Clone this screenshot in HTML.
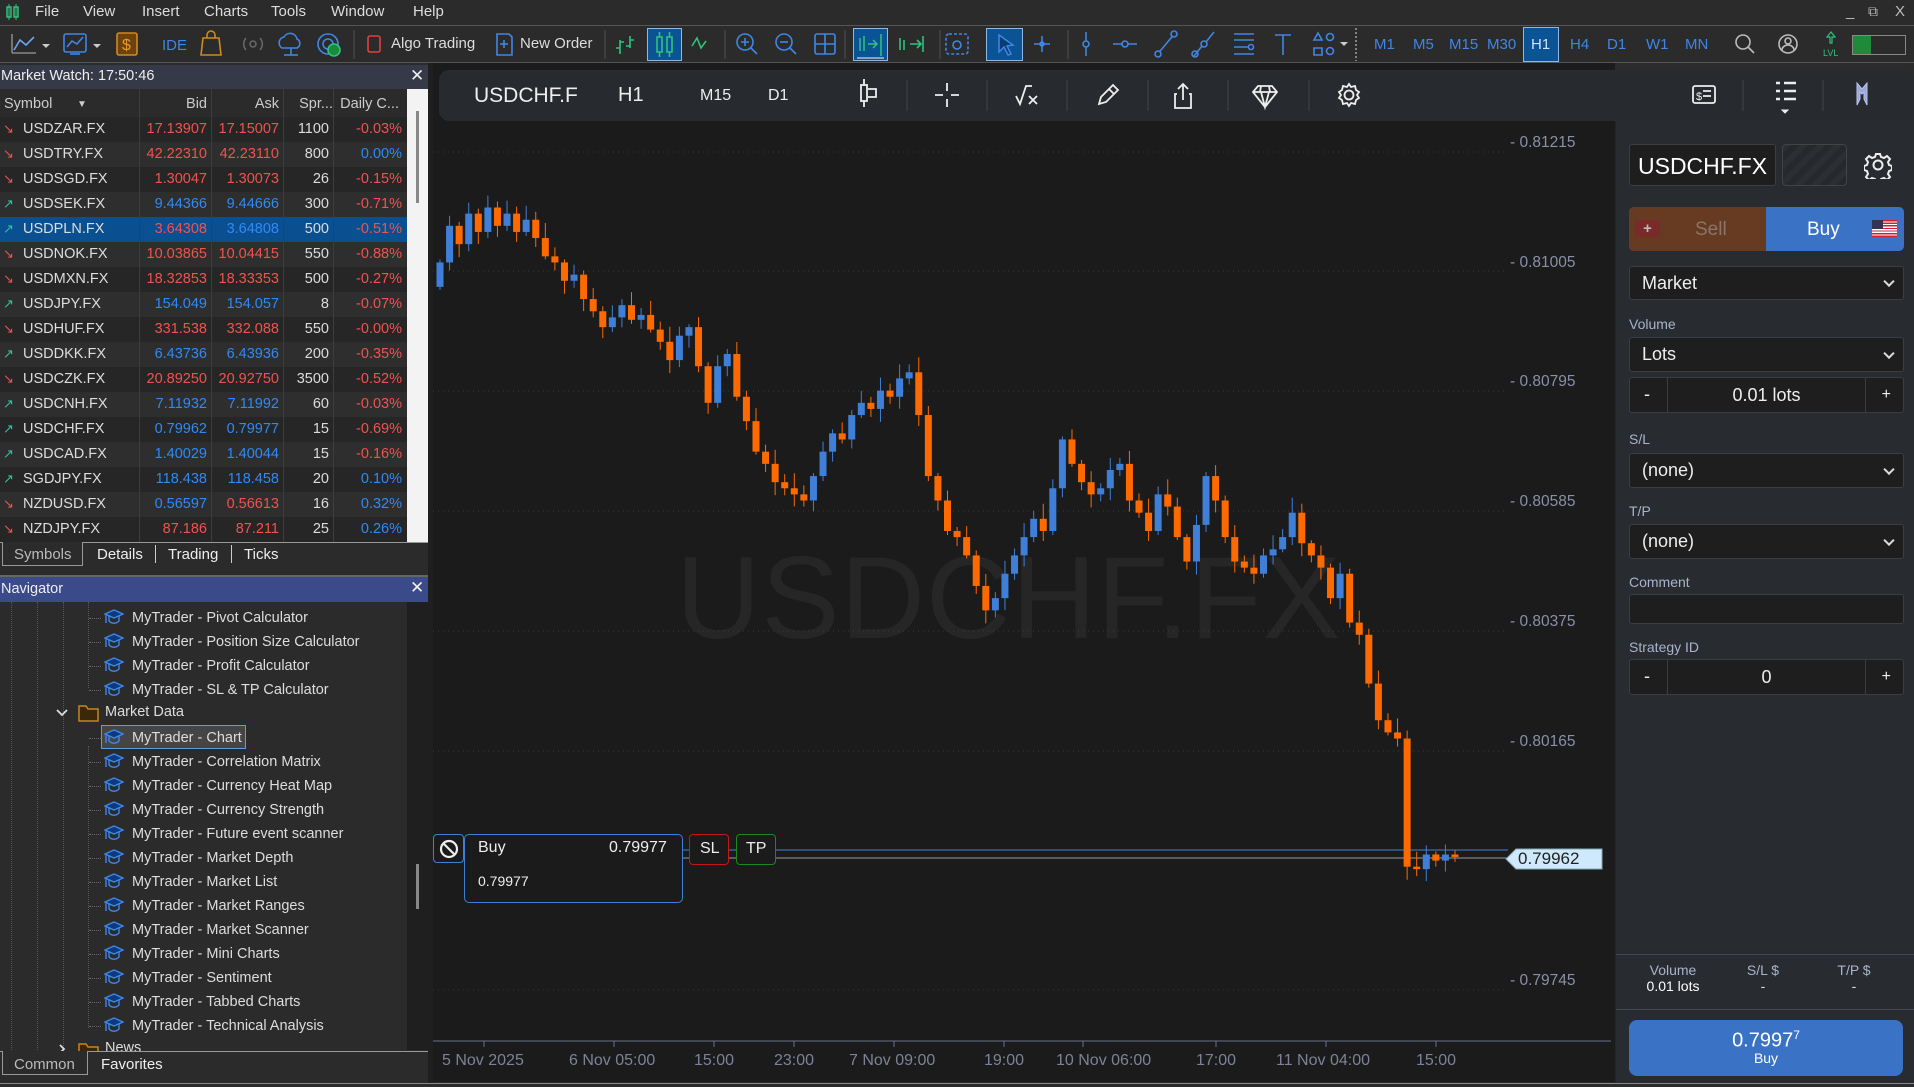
<!DOCTYPE html>
<html><head><meta charset="utf-8"><style>
*{box-sizing:border-box;margin:0;padding:0}
body{width:1914px;height:1087px;background:#2b2b2b;font-family:"Liberation Sans",sans-serif;color:#ddd;position:relative;overflow:hidden;font-size:14px}
.a{position:absolute}
.menu span{position:absolute;top:3px;font-size:15px;color:#ddd}
.tf{position:absolute;top:36px;font-size:15px;color:#3f86e6}
.hl{position:absolute;background:#0a5394;border:1px solid #8fb8e6}
.row{position:absolute;left:0;width:407px;height:25px;font-size:14.5px}
.row span{position:absolute;top:4px}
.c1{left:23px;color:#ddd}.c2{right:200px}.c3{right:128px}.c4{right:78px;color:#ddd}.c5{right:5px}
.r{color:#f0534f}.b{color:#2f8af5}
.arr{left:3px;font-size:13px;top:4px}
.nav{position:absolute;font-size:14.5px;color:#ddd;left:132px}
.ic{position:absolute;left:104px;width:20px;height:16px}
.lbl{position:absolute;left:1629px;font-size:14px;color:#a8b4cc}
.inp{position:absolute;left:1629px;width:275px;background:#1e1e1e;border:1px solid #3a3d42;border-radius:3px;color:#eee;font-size:18px}
.chev{position:absolute;right:10px;top:50%;width:8px;height:8px;border-right:2px solid #ddd;border-bottom:2px solid #ddd;transform:translateY(-70%) rotate(45deg)}
.pl{position:absolute;left:1510px;font-size:15.5px;color:#8a90a8}
.tl{position:absolute;top:1052px;font-size:16px;color:#7d8298}
</style></head><body>
<!-- menu -->
<div class="menu a" style="left:0;top:0;width:1914px;height:25px;background:#2b2b2b">
<svg class="a" style="left:6px;top:4px" width="14" height="16"><rect x="1" y="3" width="4" height="10" fill="none" stroke="#2ec27e" stroke-width="1.5"/><rect x="8" y="3" width="4" height="10" fill="none" stroke="#2ec27e" stroke-width="1.5"/><line x1="3" y1="0" x2="3" y2="16" stroke="#2ec27e"/><line x1="10" y1="0" x2="10" y2="16" stroke="#2ec27e"/></svg>
<span style="left:35px">File</span><span style="left:83px">View</span><span style="left:142px">Insert</span><span style="left:204px">Charts</span><span style="left:271px">Tools</span><span style="left:331px">Window</span><span style="left:413px">Help</span>
<span style="left:1846px;color:#bbb">_</span><span style="left:1868px;color:#bbb;font-size:14px">⧉</span><span style="left:1895px;color:#bbb">X</span>
</div>
<div class="a" style="left:0;top:25px;width:1914px;height:1px;background:#555"></div>
<!-- toolbar -->
<div class="a" style="left:0;top:26px;width:1914px;height:37px;background:#2b2b2b;border-bottom:1px solid #555"></div>
<svg class="a" style="left:0;top:26px" width="1914" height="37" fill="none" stroke-width="1.6">
<polyline points="14,24 20,14 26,19 34,11" stroke="#6ea3f0"/><line x1="12" y1="8" x2="12" y2="27" stroke="#888"/><line x1="12" y1="27" x2="36" y2="27" stroke="#888"/>
<path d="M42 18l4 4 4-4z" fill="#ccc" stroke="none"/>
<rect x="64" y="8" width="22" height="18" rx="2" stroke="#3f86e6"/><polyline points="67,21 72,15 77,18 83,11" stroke="#3f86e6"/><line x1="70" y1="28" x2="80" y2="28" stroke="#3f86e6"/>
<path d="M93 18l4 4 4-4z" fill="#ccc" stroke="none"/>
<rect x="117" y="7" width="20" height="22" rx="2" stroke="#d08a1e" fill="#6b4210"/><text x="122" y="24" fill="#e89a2a" stroke="none" font-size="16" font-family="Liberation Sans">$</text>
<text x="162" y="24" fill="#3f86e6" stroke="none" font-size="15" font-family="Liberation Sans">IDE</text>
<path d="M203 12h16l2 17h-20z" stroke="#d08a1e"/><path d="M207 12v-3a4 4 0 0 1 8 0v3" stroke="#d08a1e"/>
<circle cx="253" cy="18" r="3" stroke="#666"/><path d="M246 12a9 9 0 0 0 0 12M260 12a9 9 0 0 1 0 12" stroke="#666"/>
<path d="M282 22a6 6 0 0 1 2-11 7 7 0 0 1 13 2 5 5 0 0 1 0 9z" stroke="#3f86e6"/><line x1="291" y1="22" x2="291" y2="29" stroke="#3f86e6"/><line x1="284" y1="29" x2="298" y2="29" stroke="#3f86e6"/>
<circle cx="328" cy="18" r="10" stroke="#3f86e6"/><circle cx="328" cy="18" r="5" stroke="#3f86e6"/><circle cx="334" cy="24" r="6" fill="#1a8a3a" stroke="#2ec27e"/>
<line x1="354" y1="4" x2="354" y2="33" stroke="#444"/>
<rect x="368" y="10" width="12" height="16" rx="2" stroke="#e04040"/>
<path d="M497 8h12l3 3v18h-15z" stroke="#3f86e6"/><line x1="504" y1="14" x2="504" y2="22" stroke="#3f86e6"/><line x1="500" y1="18" x2="508" y2="18" stroke="#3f86e6"/>
<line x1="605" y1="4" x2="605" y2="33" stroke="#444"/>
<path d="M620 28v-14M620 22h-4M620 16h4M630 22v-12M630 14h4M630 20h-4" stroke="#2ec27e"/>
<path d="M692 20l5-8 4 10 5-7" stroke="#2ec27e"/>
<line x1="725" y1="4" x2="725" y2="33" stroke="#444"/>
<circle cx="745" cy="16" r="8" stroke="#3f86e6"/><line x1="751" y1="22" x2="757" y2="28" stroke="#3f86e6"/><path d="M741 16h8M745 12v8" stroke="#3f86e6"/>
<circle cx="784" cy="16" r="8" stroke="#3f86e6"/><line x1="790" y1="22" x2="796" y2="28" stroke="#3f86e6"/><path d="M780 16h8" stroke="#3f86e6"/>
<rect x="815" y="8" width="20" height="20" rx="2" stroke="#3f86e6"/><path d="M825 8v20M815 18h20" stroke="#3f86e6"/>
<line x1="845" y1="4" x2="845" y2="33" stroke="#444"/>
<path d="M900 12v12M904 14v10M910 18h10M917 14l4 4-4 4M923 10v16" stroke="#2ec27e"/>
<line x1="940" y1="4" x2="940" y2="33" stroke="#444"/>
<rect x="946" y="8" width="22" height="20" rx="3" stroke="#3f86e6" stroke-dasharray="3 2"/><circle cx="957" cy="19" r="4" stroke="#3f86e6"/>
<path d="M1042 10v16M1034 18h16" stroke="#3f86e6"/><circle cx="1042" cy="18" r="2" stroke="#3f86e6"/>
<line x1="1068" y1="4" x2="1068" y2="33" stroke="#444"/>
<path d="M1086 6v24" stroke="#3f86e6"/><circle cx="1086" cy="18" r="3" fill="#2b2b2b" stroke="#3f86e6"/>
<path d="M1113 18h24" stroke="#3f86e6"/><circle cx="1125" cy="18" r="3" fill="#2b2b2b" stroke="#3f86e6"/>
<path d="M1156 30l20-24" stroke="#3f86e6"/><circle cx="1158" cy="28" r="3" fill="#2b2b2b" stroke="#3f86e6"/><circle cx="1174" cy="8" r="3" fill="#2b2b2b" stroke="#3f86e6"/>
<path d="M1194 30l8-10M1206 16l8-10" stroke="#3f86e6"/><circle cx="1195" cy="28" r="3" stroke="#3f86e6"/><circle cx="1204" cy="18" r="3" stroke="#3f86e6"/>
<path d="M1234 8h20M1234 14h20M1234 21h20M1234 28h20" stroke="#3f86e6"/><circle cx="1251" cy="21" r="2.5" fill="#2b2b2b" stroke="#3f86e6"/>
<path d="M1275 9h16M1283 9v20" stroke="#3f86e6"/>
<path d="M1314 14l4-7 4 7z M1314 22h8v7h-8z" stroke="#3f86e6"/><circle cx="1330" cy="11" r="3.5" stroke="#3f86e6"/><circle cx="1330" cy="25" r="3.5" stroke="#3f86e6"/>
<path d="M1340 16l4 4 4-4z" fill="#ccc" stroke="none"/>
<line x1="1356" y1="2" x2="1356" y2="35" stroke="#999" stroke-dasharray="2 2"/>
<circle cx="1743" cy="16" r="7" stroke="#bbb"/><line x1="1748" y1="21" x2="1754" y2="27" stroke="#bbb"/>
<circle cx="1788" cy="18" r="9" stroke="#bbb"/><circle cx="1788" cy="15" r="3" stroke="#bbb"/><path d="M1782 24a6 5 0 0 1 12 0" stroke="#bbb"/>
<path d="M1831 6l-4 5h3v6h2v-6h3z" stroke="#2ec27e" stroke-width="1.2"/>
<text x="1823" y="30" fill="#2ec27e" stroke="none" font-size="9" font-family="Liberation Sans">LVL</text>
</svg>
<div class="hl" style="left:647px;top:28px;width:35px;height:33px"></div>
<svg class="a" style="left:647px;top:28px" width="35" height="33" fill="none" stroke="#2ec27e" stroke-width="1.6"><rect x="10" y="9" width="5" height="15"/><rect x="20" y="9" width="5" height="15"/><path d="M12.5 4v5M12.5 24v5M22.5 4v5M22.5 24v5"/></svg>
<div class="hl" style="left:853px;top:28px;width:35px;height:33px"></div>
<svg class="a" style="left:853px;top:28px" width="35" height="33" fill="none" stroke="#2ec27e" stroke-width="1.5"><path d="M7 10v13M11 8v15M15 16h8M20 12l4 4-4 4M28 6v22"/><line x1="4" y1="30" x2="31" y2="30" stroke="#bbb"/></svg>
<div class="hl" style="left:986px;top:28px;width:37px;height:33px"></div>
<svg class="a" style="left:986px;top:28px" width="37" height="33"><path d="M13 7l14 10-6 1 4 8-3 1-4-8-5 5z" fill="#0a3d70" stroke="#3f86e6" stroke-width="1.5"/></svg>
<span class="a" style="left:391px;top:35px;font-size:15px;color:#ddd">Algo Trading</span>
<span class="a" style="left:520px;top:35px;font-size:15px;color:#ddd">New Order</span>
<div class="hl" style="left:1523px;top:27px;width:36px;height:35px"></div>
<span class="tf" style="left:1374px">M1</span><span class="tf" style="left:1413px">M5</span><span class="tf" style="left:1449px">M15</span><span class="tf" style="left:1487px">M30</span><span class="tf" style="left:1531px;color:#cfe2ff">H1</span><span class="tf" style="left:1570px">H4</span><span class="tf" style="left:1607px">D1</span><span class="tf" style="left:1646px">W1</span><span class="tf" style="left:1685px">MN</span>
<div class="a" style="left:1852px;top:35px;width:54px;height:20px;border:1px solid #888;background:#2b2b2b"><div style="width:18px;height:18px;background:#1f8a3a"></div></div>

<!-- Market watch -->
<div class="a" style="left:0;top:65px;width:428px;height:24px;background:#363948"></div>
<span class="a" style="left:1px;top:68px;font-size:14.5px;color:#eee">Market Watch: 17:50:46</span>
<span class="a" style="left:410px;top:66px;font-size:17px;color:#eee">✕</span>
<div class="a" style="left:0;top:89px;width:407px;height:453px;background:#2b2b2b"></div>
<div class="a" style="left:407px;top:89px;width:21px;height:453px;background:#f3f3f3"><div style="position:absolute;left:9px;top:22px;width:3px;height:92px;background:#888"></div></div>
<div class="row" style="top:92px;height:25px"><span style="left:4px;color:#ccc">Symbol</span><span style="left:77px;color:#ccc;font-size:10px;top:7px">▼</span><span class="c2" style="color:#ccc">Bid</span><span class="c3" style="color:#ccc">Ask</span><span class="c4" style="color:#ccc;right:74px">Spr...</span><span class="c5" style="color:#ccc;right:8px">Daily C...</span></div>
<div id="mw"></div>
<div class="a" style="left:139px;top:89px;width:1px;height:453px;background:#3d3d3d"></div>
<div class="a" style="left:211px;top:89px;width:1px;height:453px;background:#3d3d3d"></div>
<div class="a" style="left:283px;top:89px;width:1px;height:453px;background:#3d3d3d"></div>
<div class="a" style="left:333px;top:89px;width:1px;height:453px;background:#3d3d3d"></div>
<!-- tabs -->
<div class="a" style="left:0;top:542px;width:428px;height:33px;background:#2b2b2b;border-top:1px solid #999"></div>
<div class="a" style="left:2px;top:542px;width:81px;height:24px;border:1px solid #999;border-top:none;background:#2b2b2b"></div>
<span class="a" style="left:14px;top:546px;font-size:15px;color:#bbb">Symbols</span>
<span class="a" style="left:97px;top:546px;font-size:15px;color:#eee">Details</span>
<div class="a" style="left:155px;top:545px;width:1px;height:18px;background:#ccc"></div>
<span class="a" style="left:168px;top:546px;font-size:15px;color:#eee">Trading</span>
<div class="a" style="left:231px;top:545px;width:1px;height:18px;background:#ccc"></div>
<span class="a" style="left:244px;top:546px;font-size:15px;color:#eee">Ticks</span>
<div class="a" style="left:0;top:575px;width:428px;height:2px;background:#666"></div>
<!-- Navigator -->
<div class="a" style="left:0;top:577px;width:428px;height:25px;background:#3b4a8a"></div>
<span class="a" style="left:1px;top:581px;font-size:14.5px;color:#eee">Navigator</span>
<span class="a" style="left:410px;top:578px;font-size:17px;color:#eee">✕</span>
<div class="a" style="left:0;top:602px;width:407px;height:448px;background:#2b2b2b"></div>
<div class="a" style="left:407px;top:602px;width:21px;height:448px;background:#1f1f1f"><div style="position:absolute;left:9px;top:262px;width:3px;height:45px;background:#888"></div></div>
<div class="a" style="left:11px;top:602px;height:448px;border-left:1px dotted #555"></div>
<div class="a" style="left:37px;top:602px;height:448px;border-left:1px dotted #555"></div>
<div class="a" style="left:63px;top:602px;height:448px;border-left:1px dotted #555"></div>
<div class="a" style="left:88px;top:602px;height:86px;border-left:1px dotted #555"></div>
<div class="a" style="left:88px;top:746px;height:282px;border-left:1px dotted #555"></div>
<div class="a" style="left:101px;top:725px;width:145px;height:24px;border:1px solid #5aa0e0;background:#454545"></div>
<div id="nav"></div>
<svg class="a" style="left:55px;top:704px" width="50" height="18"><path d="M2 6l5 5 5-5" fill="none" stroke="#ddd" stroke-width="1.8"/><path d="M24 2h7l2 3h10v12h-19z" fill="#3a2808" stroke="#c8841c" stroke-width="1.5"/></svg>
<span class="a" style="left:105px;top:704px;font-size:14.5px;color:#ddd">Market Data</span>
<svg class="a" style="left:55px;top:1042px" width="50" height="18"><path d="M5 3l4 4-4 4" fill="none" stroke="#ddd" stroke-width="1.8"/><path d="M24 2h7l2 3h10v12h-19z" fill="#3a2808" stroke="#c8841c" stroke-width="1.5"/></svg>
<span class="a" style="left:105px;top:1040px;font-size:14.5px;color:#ddd">News</span>
<div class="a" style="left:0;top:1051px;width:428px;height:36px;background:#2b2b2b;border-top:1px solid #999"></div>
<div class="a" style="left:2px;top:1051px;width:86px;height:24px;border:1px solid #999;border-top:none;background:#2b2b2b"></div>
<span class="a" style="left:14px;top:1056px;font-size:15px;color:#bbb">Common</span>
<span class="a" style="left:101px;top:1056px;font-size:15px;color:#eee">Favorites</span>
<div class="a" style="left:428px;top:63px;width:5px;height:1024px;background:#1f1f1f"></div>

<!-- chart -->
<div class="a" style="left:433px;top:63px;width:1182px;height:1019px;background:#1b1b1b"></div>
<div class="a" style="left:439px;top:70px;width:1475px;height:51px;background:#272a2f;border-radius:10px"></div>
<div class="a" style="left:1615px;top:121px;width:299px;height:966px;background:#282b30;border-left:1px solid #1c2248"></div>
<span class="a" style="left:474px;top:84px;font-size:21px;color:#eee">USDCHF.F</span>
<span class="a" style="left:618px;top:84px;font-size:20px;color:#eee">H1</span>
<span class="a" style="left:700px;top:87px;font-size:16px;color:#eee">M15</span>
<span class="a" style="left:768px;top:87px;font-size:16px;color:#eee">D1</span>
<svg class="a" style="left:433px;top:70px" width="1481" height="51" fill="none" stroke="#eee" stroke-width="1.8">
<rect x="428" y="15" width="6" height="16"/><path d="M431 9v6M431 31v6M435 19h8v8h-8"/>
<line x1="474" y1="10" x2="474" y2="41" stroke="#444" stroke-width="1"/>
<path d="M514 13v8M514 29v8M502 25h8M518 25h8"/>
<line x1="554" y1="10" x2="554" y2="41" stroke="#444" stroke-width="1"/>
<path d="M583 26l4 8 6-18h6M596 26l8 8M604 26l-8 8"/>
<line x1="634" y1="10" x2="634" y2="41" stroke="#444" stroke-width="1"/>
<path d="M666 34l2-7 12-12 5 5-12 12z M676 19l5 5"/>
<line x1="715" y1="10" x2="715" y2="41" stroke="#444" stroke-width="1"/>
<path d="M750 14v16M745 19l5-5 5 5M744 24h-2v14h16v-14h-2"/>
<line x1="795" y1="10" x2="795" y2="41" stroke="#444" stroke-width="1"/>
<path d="M825 16h14l5 6-12 15-12-15z M820 22h24M828 22l4 15 4-15M828 16l-1 6M836 16l1 6"/>
<line x1="876" y1="10" x2="876" y2="41" stroke="#444" stroke-width="1"/>
<circle cx="916" cy="25" r="4.5"/><path d="M916 14l2 3 4-1 1 4 3 2-2 3 2 3-3 2-1 4-4-1-2 3-2-3-4 1-1-4-3-2 2-3-2-3 3-2 1-4 4 1z"/>
<rect x="1260" y="16" width="22" height="17" rx="2"/><path d="M1270 21h8M1270 26h8"/><text x="1263" y="30" fill="#eee" stroke="none" font-size="11" font-family="Liberation Sans">$</text>
<line x1="1310" y1="10" x2="1310" y2="41" stroke="#444" stroke-width="1"/>
<path d="M1343 13h4M1351 13h12M1343 21h4M1351 21h12M1343 29h4M1351 29h12" stroke-width="2.5"/><path d="M1349 40l3 3 3-3z" fill="#eee" stroke-width="1"/>
<line x1="1390" y1="10" x2="1390" y2="41" stroke="#444" stroke-width="1"/>
<path d="M1424 13l5 6 5-6v22l-3-6v-7l-2 2-2-2v7l-3 6z" fill="#9aa8d8" stroke="#b8c4ec" stroke-width="1"/>
</svg>
<span class="a" style="left:676px;top:530px;font-size:117px;color:#262626;letter-spacing:1px">USDCHF.FX</span>
<svg class="a" style="left:433px;top:121px" width="1182" height="966" id="ch"></svg>
<div class="pl" style="top:134px">- 0.81215</div><div class="pl" style="top:254px">- 0.81005</div><div class="pl" style="top:373px">- 0.80795</div><div class="pl" style="top:493px">- 0.80585</div><div class="pl" style="top:613px">- 0.80375</div><div class="pl" style="top:733px">- 0.80165</div><div class="pl" style="top:972px">- 0.79745</div>
<span class="tl" style="left:442px">5 Nov 2025</span><span class="tl" style="left:569px">6 Nov 05:00</span><span class="tl" style="left:694px">15:00</span><span class="tl" style="left:774px">23:00</span><span class="tl" style="left:849px">7 Nov 09:00</span><span class="tl" style="left:984px">19:00</span><span class="tl" style="left:1056px">10 Nov 06:00</span><span class="tl" style="left:1196px">17:00</span><span class="tl" style="left:1276px">11 Nov 04:00</span><span class="tl" style="left:1416px">15:00</span>
<!-- price label -->
<svg class="a" style="left:1505px;top:848px" width="98" height="22"><path d="M1 11l10-10h86v20h-86z" fill="#cde9fb" stroke="#8ab"/></svg>
<span class="a" style="left:1518px;top:849px;font-size:17px;color:#222">0.79962</span>
<!-- order -->
<div class="a" style="left:433px;top:834px;width:31px;height:29px;border:1px solid #3f7fd8;border-radius:4px;background:#1b1b1b"></div>
<svg class="a" style="left:438px;top:838px" width="22" height="22"><circle cx="11" cy="11" r="8" fill="none" stroke="#eee" stroke-width="2.2"/><line x1="5.5" y1="5.5" x2="16.5" y2="16.5" stroke="#eee" stroke-width="2.2"/></svg>
<div class="a" style="left:464px;top:834px;width:219px;height:69px;border:1px solid #3f7fd8;border-radius:5px;background:#1b1b1b"></div>
<span class="a" style="left:478px;top:839px;font-size:16px;color:#eee">Buy</span>
<span class="a" style="left:609px;top:839px;font-size:16px;color:#eee">0.79977</span>
<span class="a" style="left:478px;top:873px;font-size:14px;color:#eee">0.79977</span>
<div class="a" style="left:689px;top:834px;width:40px;height:31px;border:1px solid #c01818;border-radius:4px;background:#1b1b1b"></div>
<span class="a" style="left:700px;top:840px;font-size:16px;color:#eee">SL</span>
<div class="a" style="left:736px;top:834px;width:40px;height:31px;border:1px solid #1a8a1a;border-radius:4px;background:#1b1b1b"></div>
<span class="a" style="left:746px;top:840px;font-size:16px;color:#eee">TP</span>

<!-- right panel -->
<div class="inp" style="left:1629px;top:144px;width:147px;height:42px;overflow:hidden;white-space:nowrap;padding:8px 8px;font-size:23px;color:#fff">USDCHF.FX</div>
<div class="a" style="left:1782px;top:144px;width:65px;height:42px;border:1px solid #444;border-radius:4px;background:repeating-linear-gradient(135deg,#2b2e33 0 6px,#25282c 6px 12px)"></div>
<svg class="a" style="left:1864px;top:151px" width="28" height="28" fill="none" stroke="#eee" stroke-width="2"><circle cx="14" cy="14" r="4.5"/><path d="M12 3h4l1 3 3 1 3-2 3 3-2 3 1 3 3 1v4l-3 1-1 3 2 3-3 3-3-2-3 1-1 3h-4l-1-3-3-1-3 2-3-3 2-3-1-3-3-1v-4l3-1 1-3-2-3 3-3 3 2 3-1z"/></svg>
<div class="a" style="left:1629px;top:207px;width:275px;height:44px;border-radius:5px;overflow:hidden;background:#3a73c6"><div style="width:137px;height:44px;background:#673b22"></div></div>
<div class="a" style="left:1635px;top:220px;width:25px;height:17px;background:#7a2a28;color:#bbb;font-size:15px;text-align:center;line-height:17px;font-weight:bold">+</div>
<span class="a" style="left:1695px;top:219px;font-size:19px;color:#8a7568">Sell</span>
<span class="a" style="left:1807px;top:219px;font-size:19px;color:#fff">Buy</span>
<div class="a" style="left:1872px;top:220px;width:25px;height:17px;background:repeating-linear-gradient(#c23 0 1.3px,#fff 1.3px 2.6px)"><div style="width:11px;height:9px;background:#335"></div></div>
<div class="inp" style="top:266px;height:34px;padding:6px 12px">Market<i class="chev"></i></div>
<div class="lbl" style="top:316px">Volume</div>
<div class="inp" style="top:337px;height:35px;padding:6px 12px">Lots<i class="chev"></i></div>
<div class="inp" style="top:377px;height:36px"><div style="position:absolute;left:37px;top:0;width:1px;height:34px;background:#3a3d42"></div><div style="position:absolute;right:37px;top:0;width:1px;height:34px;background:#3a3d42"></div><span style="position:absolute;left:14px;top:6px">-</span><span style="position:absolute;left:0;right:0;text-align:center;top:7px">0.01 lots</span><span style="position:absolute;right:12px;top:8px;font-size:16px">+</span></div>
<div class="lbl" style="top:431px">S/L</div>
<div class="inp" style="top:453px;height:35px;padding:6px 12px">(none)<i class="chev"></i></div>
<div class="lbl" style="top:503px">T/P</div>
<div class="inp" style="top:524px;height:35px;padding:6px 12px">(none)<i class="chev"></i></div>
<div class="lbl" style="top:574px">Comment</div>
<div class="inp" style="top:594px;height:30px"></div>
<div class="lbl" style="top:639px">Strategy ID</div>
<div class="inp" style="top:659px;height:36px"><div style="position:absolute;left:37px;top:0;width:1px;height:34px;background:#3a3d42"></div><div style="position:absolute;right:37px;top:0;width:1px;height:34px;background:#3a3d42"></div><span style="position:absolute;left:14px;top:6px">-</span><span style="position:absolute;left:0;right:0;text-align:center;top:7px">0</span><span style="position:absolute;right:12px;top:8px;font-size:16px">+</span></div>
<div class="a" style="left:1616px;top:954px;width:298px;height:1px;background:#44474d"></div>
<div class="a" style="left:1616px;top:1009px;width:298px;height:1px;background:#44474d"></div>
<div class="a" style="left:1640px;top:962px;width:66px;text-align:center;font-size:14px;color:#a8b4cc">Volume<br><span style="color:#fff">0.01 lots</span></div>
<div class="a" style="left:1738px;top:962px;width:50px;text-align:center;font-size:14px;color:#a8b4cc">S/L $<br><span style="color:#ddd">-</span></div>
<div class="a" style="left:1829px;top:962px;width:50px;text-align:center;font-size:14px;color:#a8b4cc">T/P $<br><span style="color:#ddd">-</span></div>
<div class="a" style="left:1629px;top:1020px;width:274px;height:56px;background:#3a73c6;border-radius:8px;text-align:center;color:#fff">
<div style="font-size:20px;margin-top:8px">0.7997<sup style="font-size:12px">7</sup></div><div style="font-size:14px;margin-top:-3px">Buy</div></div>
<div class="a" style="left:0;top:1083px;width:1914px;height:4px;background:#2b2b2b;border-top:1px solid #888"></div>

<script>
var rows=[["USDZAR.FX","17.13907","17.15007","1100","-0.03%",0,"r","r","r"],
["USDTRY.FX","42.22310","42.23110","800","0.00%",0,"r","r","b"],
["USDSGD.FX","1.30047","1.30073","26","-0.15%",0,"r","r","r"],
["USDSEK.FX","9.44366","9.44666","300","-0.71%",1,"b","b","r"],
["USDPLN.FX","3.64308","3.64808","500","-0.51%",1,"r","b","r"],
["USDNOK.FX","10.03865","10.04415","550","-0.88%",0,"r","r","r"],
["USDMXN.FX","18.32853","18.33353","500","-0.27%",0,"r","r","r"],
["USDJPY.FX","154.049","154.057","8","-0.07%",1,"b","b","r"],
["USDHUF.FX","331.538","332.088","550","-0.00%",0,"r","r","r"],
["USDDKK.FX","6.43736","6.43936","200","-0.35%",1,"b","b","r"],
["USDCZK.FX","20.89250","20.92750","3500","-0.52%",0,"r","r","r"],
["USDCNH.FX","7.11932","7.11992","60","-0.03%",1,"b","b","r"],
["USDCHF.FX","0.79962","0.79977","15","-0.69%",1,"b","b","r"],
["USDCAD.FX","1.40029","1.40044","15","-0.16%",1,"b","b","r"],
["SGDJPY.FX","118.438","118.458","20","0.10%",1,"b","b","b"],
["NZDUSD.FX","0.56597","0.56613","16","0.32%",0,"b","r","b"],
["NZDJPY.FX","87.186","87.211","25","0.26%",0,"r","r","b"]];
var h="";rows.forEach(function(r,i){var bg=i==4?"#0a5091":(i%2?"#2e2e2e":"#262626");
h+='<div class="row" style="top:'+(117+i*25)+'px;background:'+bg+'"><span class="arr" style="color:'+(r[5]?"#2ec29a":"#f0534f")+'">'+(r[5]?"↗":"↘")+'</span><span class="c1">'+r[0]+'</span><span class="c2 '+r[6]+'">'+r[1]+'</span><span class="c3 '+r[7]+'">'+r[2]+'</span><span class="c4">'+r[3]+'</span><span class="c5 '+r[8]+'">'+r[4]+'</span></div>';});
document.getElementById("mw").innerHTML=h;
var nv=["Pivot Calculator","Position Size Calculator","Profit Calculator","SL &amp; TP Calculator",null,"Chart","Correlation Matrix","Currency Heat Map","Currency Strength","Future event scanner","Market Depth","Market List","Market Ranges","Market Scanner","Mini Charts","Sentiment","Tabbed Charts","Technical Analysis"];
h="";nv.forEach(function(n,i){if(!n)return;var t=607+i*24;
h+='<div class="a" style="left:89px;top:'+(t+11)+'px;width:12px;border-top:1px dotted #666"></div><svg class="ic" style="top:'+(t+2)+'px" viewBox="0 0 20 16"><path d="M1 5l9-4 9 4-9 4z" fill="#0c3a80" stroke="#3f86e6" stroke-width="1.4"/><path d="M5 7v5c3 3 7 3 10 0v-5" fill="none" stroke="#3f86e6" stroke-width="1.4"/><path d="M2 6v8" stroke="#3f86e6" stroke-width="1.4"/></svg><span class="nav" style="top:'+(t+3)+'px">MyTrader - '+n+'</span>';});
document.getElementById("nav").innerHTML=h;
var d=[215,185,200,175,190,170,185,175,190,180,195,210,215,230,225,245,255,268,260,250,262,258,270,280,295,275,268,300,330,300,290,325,345,370,380,395,400,405,410,390,370,355,360,340,330,335,320,325,310,305,340,390,410,435,440,455,480,500,490,470,455,440,425,435,400,360,380,395,405,400,385,380,410,420,435,405,415,440,460,430,390,410,440,460,465,470,455,450,440,420,445,455,465,490,470,510,520,560,590,600,605,710,712,700,705,700,702];
var s="",oy=121,k=1.2207,n=d.length,st=(1455-440)/(n-1);
[143,262,382,502,622,742,981].forEach(function(y){s+='<line x1="0" x2="1075" y1="'+(y-oy+9)+'" y2="'+(y-oy+9)+'" stroke="#3a3a3a" stroke-dasharray="1 4"/>';});
s+='<line x1="0" x2="1178" y1="920" y2="920" stroke="#6a7088"/>';
[484,614,714,794,894,1004,1083,1216,1326,1436].forEach(function(x){s+='<line x1="'+(x-433)+'" x2="'+(x-433)+'" y1="920" y2="926" stroke="#6a7088"/>';});
s+='<line x1="250" x2="1075" y1="729" y2="729" stroke="#3f7fd8"/><line x1="0" x2="1075" y1="737" y2="737" stroke="#999"/>';
for(var i=0;i<n;i++){var o=(i?d[i-1]:d[0]+20)*k-oy,c=d[i]*k-oy,x=440+i*st-433;var up=c<o,col=up?"#3f7fd8":"#ff6a00";
var t=Math.min(o,c),b=Math.max(o,c);if(b-t<2)b=t+2;var hi=t-3-(i*7%13),lo=b+3+(i*5%11);
s+='<line x1="'+x+'" x2="'+x+'" y1="'+hi+'" y2="'+lo+'" stroke="'+col+'"/><rect x="'+(x-3.5)+'" y="'+t+'" width="7" height="'+(b-t)+'" fill="'+col+'"/>';}
document.getElementById("ch").innerHTML=s;
</script>
</body></html>
